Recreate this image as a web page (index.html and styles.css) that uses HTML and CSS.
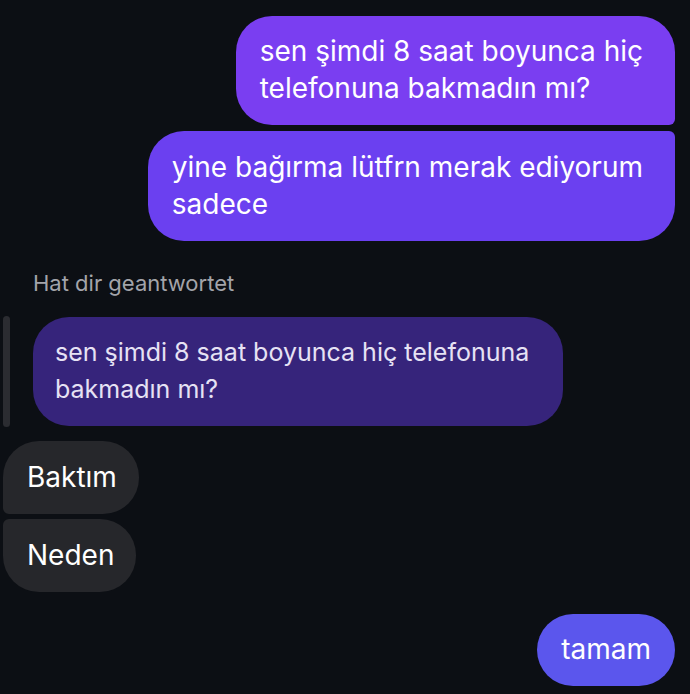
FILE: index.html
```html
<!DOCTYPE html>
<html lang="tr">
<head>
    <meta charset="UTF-8">
    <meta name="viewport" content="width=device-width, initial-scale=1.0">
    <title>Sohbet</title>
    <link rel="stylesheet" href="styles.css">
</head>
<body>
    <div class="chat">
        <!-- giden mesajlar -->
        <div class="msg out first">sen şimdi 8 saat boyunca hiç<br>telefonuna bakmadın mı?</div>
        <div class="msg out second">yine bağırma lütfrn merak ediyorum<br>sadece</div>

        <!-- yanıt -->
        <div class="reply-label">Hat dir geantwortet</div>
        <div class="reply">
            <div class="reply-bar"></div>
            <div class="quote">sen şimdi 8 saat boyunca hiç telefonuna<br>bakmadın mı?</div>
        </div>

        <!-- gelen mesajlar -->
        <div class="msg in in-top">Baktım</div>
        <div class="msg in in-bottom">Neden</div>

        <div class="msg out single">tamam</div>
    </div>
</body>
</html>
```

FILE: styles.css
```css
/* genel */
body {
    margin: 0;
    background-color: #0c0f14;
    font-family: Inter, 'Noto Sans', Arial, sans-serif;
    color: #fff;
}

.chat {
    display: flex;
    flex-direction: column;
    padding: 16px 15px 0 3px;
}

/* baloncuklar */
.msg {
    font-size: 28px;
    line-height: 37px;
    padding: 18px 32px 18px 23px;
    border-radius: 36px;
    box-sizing: border-box;
}

.out {
    align-self: flex-end;
}

.first {
    background-color: #7a3ef1;
    border-bottom-right-radius: 6px;
    padding-top: 17px;
    padding-left: 24px;
}

.second {
    background-color: #6b40f0;
    border-top-right-radius: 6px;
    margin-top: 6px;
    padding-left: 24px;
}

.single {
    background-color: #5b56ed;
    margin-top: 22px;
    padding: 17px 24px 18px 24px;
}

.in {
    align-self: flex-start;
    background-color: #26272b;
    padding-left: 24px;
    padding-right: 22px;
}

.in-top {
    margin-top: 15px;
    border-bottom-left-radius: 6px;
}

.in-bottom {
    margin-top: 5px;
    border-top-left-radius: 6px;
}

/* yanıt alanı */
.reply-label {
    margin: 28px 0 0 30px;
    font-size: 22px;
    line-height: 28px;
    color: #a3a4aa;
}

.reply {
    display: flex;
    gap: 23px;
    margin-top: 20px;
}

.reply-bar {
    width: 7px;
    margin-top: -1px;
    margin-bottom: -1px;
    border-radius: 4px;
    background-color: #2b2c31;
}

.quote {
    background-color: #36247b;
    color: #e6e2f4;
    font-size: 25px;
    line-height: 37px;
    padding: 17px 34px 18px 22px;
    border-radius: 36px;
}
```
